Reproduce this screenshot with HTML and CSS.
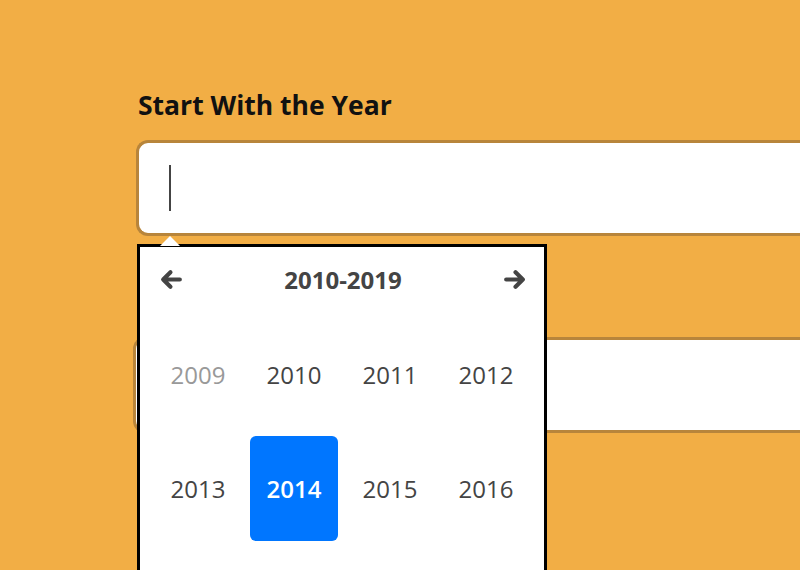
FILE: index.html
```html
<!DOCTYPE html>
<html>
<head>
<meta charset="utf-8">
<link rel="stylesheet" href="styles.css">
</head>
<body>
<div class="page">
  <label class="label">Start With the Year</label>
  <div class="field field-first"><span class="caret-line"></span></div>
  <div class="field field-second"></div>

  <div class="picker">
    <span class="pointer"></span>
    <div class="picker-head">
      <svg class="nav" viewBox="0 0 24 24" width="25" height="25"><path d="M20 12H5M11 5l-7 7 7 7" fill="none" stroke="#444" stroke-width="4" stroke-linecap="round" stroke-linejoin="round"/></svg>
      <span class="range">2010-2019</span>
      <svg class="nav" viewBox="0 0 24 24" width="25" height="25"><path d="M4 12h15M13 5l7 7-7 7" fill="none" stroke="#444" stroke-width="4" stroke-linecap="round" stroke-linejoin="round"/></svg>
    </div>
    <div class="years">
      <span class="year muted">2009</span>
      <span class="year">2010</span>
      <span class="year">2011</span>
      <span class="year">2012</span>
      <span class="year">2013</span>
      <span class="year selected">2014</span>
      <span class="year">2015</span>
      <span class="year">2016</span>
    </div>
  </div>
</div>
</body>
</html>
```
FILE: styles.css
```css
html, body {
  margin: 0;
  padding: 0;
  height: 100%;
  overflow: hidden;
}
body {
  background: #f2ae45;
  font-family: "Open Sans", "Noto Sans", sans-serif;
}
.page {
  position: relative;
  height: 570px;
  overflow: hidden;
  box-sizing: border-box;
  padding: 88px 0 0 136px;
}
.label {
  display: block;
  font-size: 26.5px;
  font-weight: 700;
  color: #111;
  line-height: 34px;
  margin-left: 2px;
  letter-spacing: 0;
}
.field {
  box-sizing: border-box;
  width: 664px;
  height: 96px;
  background: #fff;
  border: 3px solid #b8853b;
  border-right: none;
  border-radius: 12px 0 0 12px;
  display: flex;
  align-items: center;
}
.field-first {
  margin-top: 18px;
}
.field-second {
  margin-top: 101px;
  margin-left: -3px;
  width: 667px;
}
.caret-line {
  display: block;
  width: 2px;
  height: 46px;
  background: #444;
  margin-left: 30px;
}
.picker {
  position: absolute;
  left: 137px;
  top: 244px;
  width: 410px;
  height: 326px;
  box-sizing: border-box;
  background: #fff;
  border: 3px solid #000;
  border-bottom: none;
}
.pointer {
  position: absolute;
  top: -11px;
  left: 20px;
  width: 0;
  height: 0;
  border-left: 10px solid transparent;
  border-right: 10px solid transparent;
  border-bottom: 10px solid #fff;
}
.picker-head {
  display: flex;
  align-items: center;
  justify-content: space-between;
  padding: 18px 17px 0 19px;
  height: 28px;
}
.range {
  font-size: 24px;
  font-weight: 700;
  color: #444;
}
.years {
  display: grid;
  grid-template-columns: repeat(4, 88px);
  grid-auto-rows: 105px;
  column-gap: 8px;
  row-gap: 9px;
  padding: 29px 0 0 14px;
}
.year {
  display: flex;
  align-items: center;
  justify-content: center;
  font-size: 24px;
  color: #444;
  border-radius: 6px;
}
.year.muted {
  color: #999;
}
.year.selected {
  background: #0076ff;
  color: #fff;
  font-weight: 600;
}
```
